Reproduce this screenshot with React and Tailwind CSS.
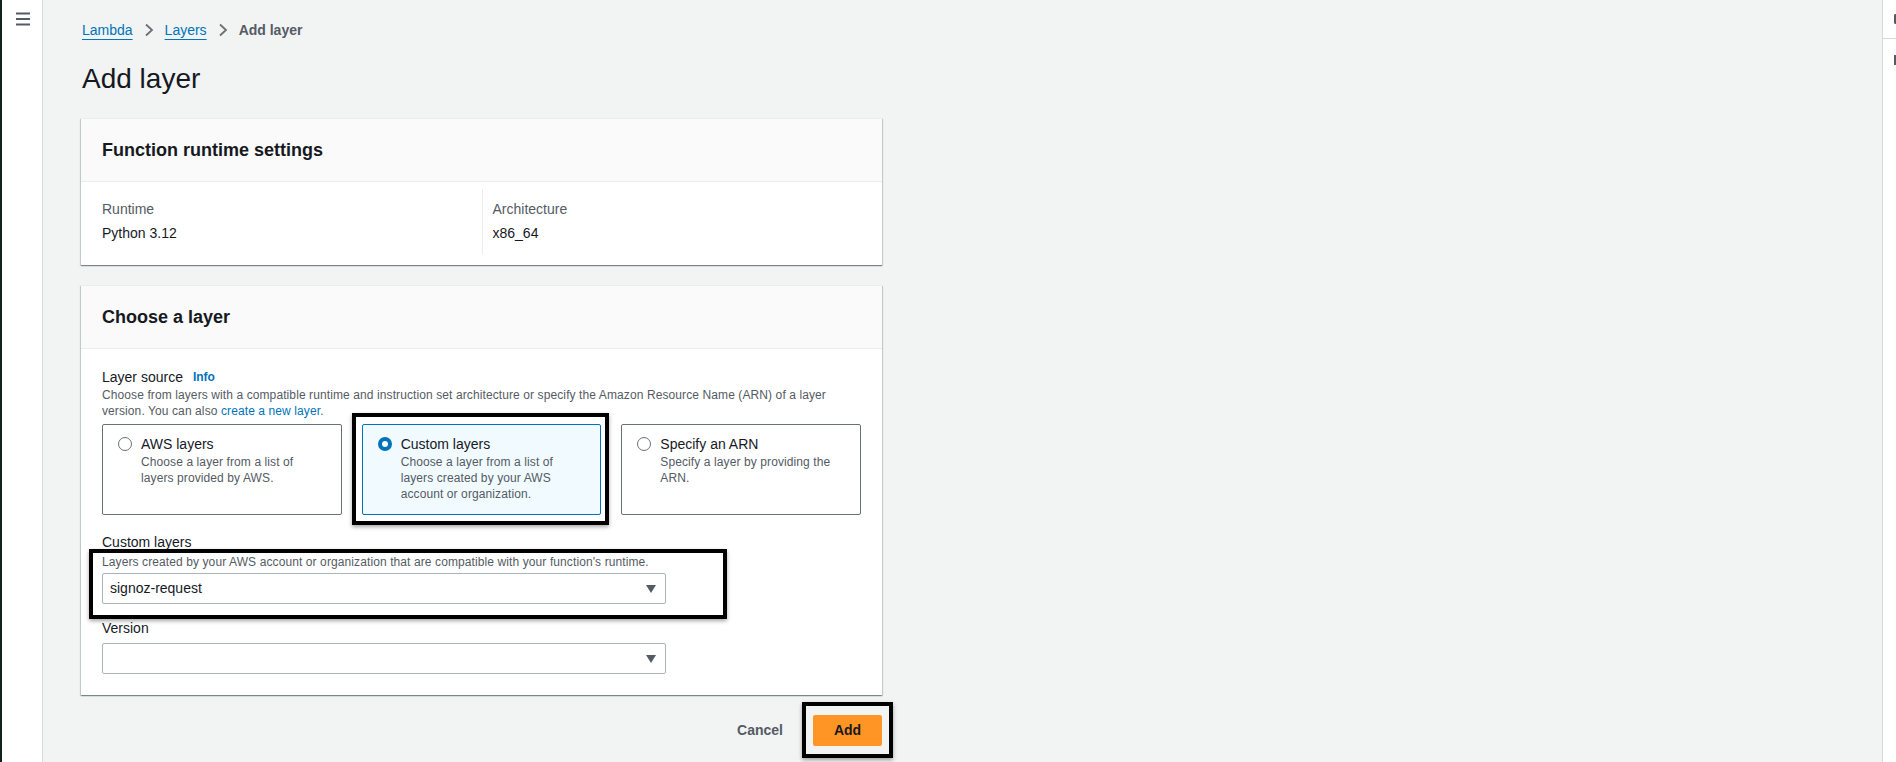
import React from 'react'

const font = { fontFamily: '"Liberation Sans", Arial, sans-serif' }

function Hamburger() {
  return (
    <svg width="16" height="14" viewBox="0 0 16 14" fill="none">
      <path d="M1 1.5H15M1 7H15M1 12.5H15" stroke="#545b64" strokeWidth="2" />
    </svg>
  )
}

function Chevron() {
  return (
    <svg width="10" height="14" viewBox="0 0 10 14" fill="none" className="mx-[11px]">
      <path d="M2 1.5L8 7L2 12.5" stroke="#687078" strokeWidth="1.8" />
    </svg>
  )
}

function Caret() {
  return (
    <svg width="12" height="10" viewBox="0 0 12 10">
      <path d="M1 1H11L6 9Z" fill="#545b64" />
    </svg>
  )
}

function Annotation({ className }) {
  return <div className={`pointer-events-none absolute border-[4px] border-black shadow-[0_2px_4px_rgba(0,0,0,0.35)] ${className}`} />
}

function Radio({ checked }) {
  return checked ? (
    <span className="mt-[3px] flex h-[14px] w-[14px] shrink-0 items-center justify-center rounded-full bg-[#0073bb]">
      <span className="h-[6px] w-[6px] rounded-full bg-white" />
    </span>
  ) : (
    <span className="mt-[3px] h-[14px] w-[14px] shrink-0 rounded-full border-[1.5px] border-[#687078] bg-white" />
  )
}

function Tile({ title, desc, checked }) {
  return (
    <div
      className={`flex h-[91px] gap-[9px] rounded-[2px] border px-[15px] pt-[9px] ${
        checked ? 'border-[#0073bb] bg-[#f1faff]' : 'border-[#687078] bg-white'
      }`}
    >
      <Radio checked={checked} />
      <div>
        <div className="text-[14px] leading-[20px] text-[#16191f]">{title}</div>
        <div className="text-[12px] leading-[16px] tracking-[0.1px] text-[#545b64]">{desc}</div>
      </div>
    </div>
  )
}

function Select({ value }) {
  return (
    <div className="flex h-[31px] w-[564px] items-center justify-between rounded-[2px] border border-[#aab7b8] bg-white pl-[7px] pr-[8px]">
      <span className="text-[14px] text-[#16191f]">{value}</span>
      <Caret />
    </div>
  )
}

const cardCls =
  'w-[801px] bg-white border-t border-[#eaeded] shadow-[0_1px_1px_0_rgba(0,28,36,0.3),1px_1px_1px_0_rgba(0,28,36,0.15),-1px_1px_1px_0_rgba(0,28,36,0.15)]'

function CardHeader({ children }) {
  return (
    <div className="flex h-[63px] items-center border-b border-[#eaeded] bg-[#fafafa] px-[21px]">
      <h2 className="text-[18px] font-bold text-[#16191f]">{children}</h2>
    </div>
  )
}

export default function App() {
  return (
    <div style={font} className="flex h-[762px] w-[1896px] overflow-hidden bg-[#f2f3f3]">
      {/* left nav strip */}
      <div className="w-[43px] shrink-0 border-l-2 border-r border-l-[#0e2121] border-r-[#d5dbdb] bg-white pl-[13px] pt-[12px]">
        <Hamburger />
      </div>

      {/* main */}
      <main className="flex-1 pl-[38px]">
        <nav className="mt-[20px] flex h-[20px] items-center pl-px text-[14px]">
          <a className="text-[#0073bb] underline decoration-1 underline-offset-[4px]">Lambda</a>
          <Chevron />
          <a className="text-[#0073bb] underline decoration-1 underline-offset-[4px]">Layers</a>
          <Chevron />
          <span className="font-bold text-[#545b64]">Add layer</span>
        </nav>

        <h1 className="mt-[21px] pl-px text-[28px] leading-[36px] text-[#16191f]">Add layer</h1>

        <section className={`mt-[21px] ${cardCls}`}>
          <CardHeader>Function runtime settings</CardHeader>
          <div className="grid grid-cols-2 px-[21px] pb-[11px] pt-[7px]">
            <div className="pb-[11px] pt-[10px]">
              <div className="text-[14px] leading-[20px] text-[#545b64]">Runtime</div>
              <div className="mt-[4px] text-[14px] leading-[20px] text-[#16191f]">Python 3.12</div>
            </div>
            <div className="border-l border-[#eaeded] pb-[11px] pl-[10px] pt-[10px]">
              <div className="text-[14px] leading-[20px] text-[#545b64]">Architecture</div>
              <div className="mt-[4px] text-[14px] leading-[20px] text-[#16191f]">x86_64</div>
            </div>
          </div>
        </section>

        <section className={`mt-[20px] ${cardCls}`}>
          <CardHeader>Choose a layer</CardHeader>
          <div className="px-[21px] pb-[21px] pt-[18px]">
            <div className="flex items-center text-[14px] leading-[20px] text-[#16191f]">
              Layer source
              <span className="ml-[10px] text-[12px] font-bold text-[#0073bb]">Info</span>
            </div>
            <p className="text-[12px] leading-[16px] tracking-[0.1px] text-[#545b64]">
              Choose from layers with a compatible runtime and instruction set architecture or specify the Amazon Resource Name (ARN) of a layer
              <br />
              version. You can also <span className="text-[#0073bb]">create a new layer</span>.
            </p>

            <div className="mt-[5px] grid grid-cols-3 gap-[20px]">
              <Tile title="AWS layers" desc={<>Choose a layer from a list of<br />layers provided by AWS.</>} />
              <div className="relative">
                <Tile
                  checked
                  title="Custom layers"
                  desc={<>Choose a layer from a list of<br />layers created by your AWS<br />account or organization.</>}
                />
                <Annotation className="-bottom-[10px] -left-[10px] -right-[8px] -top-[11px]" />
              </div>
              <Tile title="Specify an ARN" desc={<>Specify a layer by providing the<br />ARN.</>} />
            </div>

            <div className="relative mt-[17px]">
              <div className="text-[14px] leading-[20px] text-[#16191f]">Custom layers</div>
              <div className="mt-[2px] text-[12px] leading-[16px] tracking-[0.1px] text-[#545b64]">
                Layers created by your AWS account or organization that are compatible with your function's runtime.
              </div>
              <div className="mt-[3px]">
                <Select value="signoz-request" />
              </div>
              <Annotation className="-left-[13px] top-[17px] h-[70px] w-[638px]" />
            </div>

            <div className="mt-[14px] text-[14px] leading-[20px] text-[#16191f]">Version</div>
            <div className="mt-[5px]">
              <Select value="" />
            </div>
          </div>
        </section>

        <div className="mt-[20px] flex w-[801px] items-center justify-end">
          <span className="text-[14px] font-bold text-[#545b64]">Cancel</span>
          <div className="relative ml-[30px]">
            <button className="h-[31px] w-[69px] rounded-[2px] bg-[#ff9524] text-[14px] font-bold text-[#16191f]">Add</button>
            <Annotation className="-bottom-[12px] -left-[11px] -right-[11px] -top-[13px]" />
          </div>
        </div>
      </main>

      {/* right tools strip */}
      <div className="w-[14px] shrink-0 border-l border-[#d5dbdb] bg-white">
        <div className="flex h-[39px] items-center border-b border-[#d5dbdb] pl-[11px]">
          <span className="h-[10px] w-[4px] rounded-l-full border-2 border-r-0 border-[#545b64]" />
        </div>
        <div className="pl-[11px] pt-[16px]">
          <span className="block h-[10px] w-[3px] bg-[#545b64]" />
        </div>
      </div>
    </div>
  )
}
